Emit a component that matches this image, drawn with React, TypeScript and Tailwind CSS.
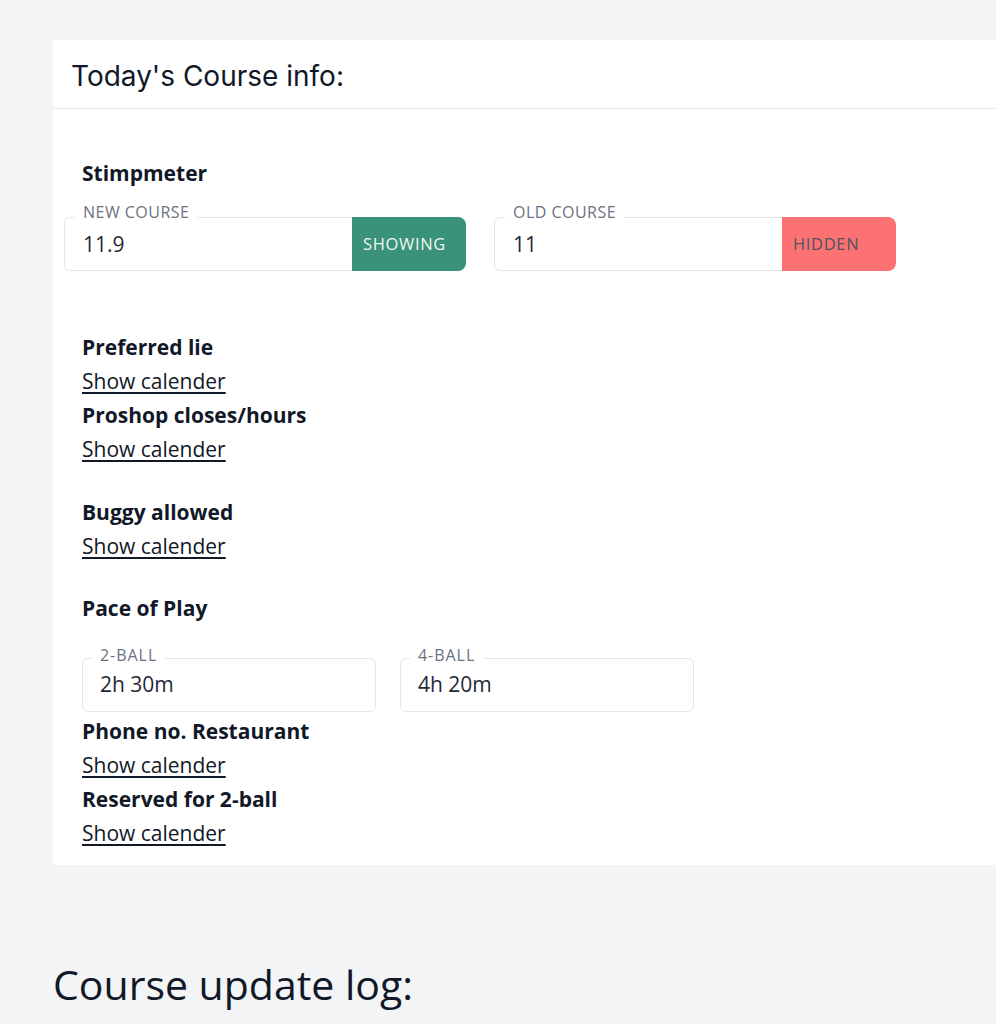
import React from "react";

function StimpField({ label, value, btn, btnClass }: { label: string; value: string; btn: string; btnClass: string }) {
  return (
    <div className="relative flex h-[54px] w-[402px]">
      <div className="flex flex-1 items-center rounded-l-[6px] border border-r-0 border-[#e5e7eb] pl-[18px] pt-[2px] text-[21px] text-[#1f2937]">
        {value}
      </div>
      <div className={`flex w-[114px] items-center rounded-r-[8px] pl-[11px] text-[16.5px] tracking-[0.04em] ${btnClass}`}>{btn}</div>
      <span className="absolute left-[11px] top-[-15px] bg-white px-[8px] text-[16px] leading-[20px] tracking-[0.03em] text-[#6b7280]">
        {label}
      </span>
    </div>
  );
}

function PaceField({ label, value }: { label: string; value: string }) {
  return (
    <div className="relative flex h-[54px] w-[294px] items-center rounded-[6px] border border-[#e5e7eb] pl-[17px] text-[21px] text-[#1f2937]">
      {value}
      <span className="absolute left-[9px] top-[-14px] bg-white px-[8px] text-[16px] leading-[20px] tracking-[0.06em] text-[#6b7280]">
        {label}
      </span>
    </div>
  );
}

function Heading({ children }: { children: React.ReactNode }) {
  return <div className="text-[21px] font-bold leading-[34px] text-[#111827]">{children}</div>;
}

function CalLink() {
  return (
    <div className="text-[21px] leading-[34px]">
      <a className="text-[#111827] underline underline-offset-[3px]" href="#">
        Show calender
      </a>
    </div>
  );
}

export default function App() {
  return (
    <div className="min-h-[1024px] bg-[#f3f4f6] pl-[53px] pt-[40px]" style={{ fontFamily: '"Open Sans", "Noto Sans", sans-serif' }}>
      <div className="w-[990px] bg-white">
        <div className="flex h-[69px] items-center border-b border-[#e5e7eb] pl-[18px] pt-[3px]">
          <h2 className="text-[28px] text-[#111827]" style={{ fontFamily: 'Inter, sans-serif' }}>
            Today's Course info:
          </h2>
        </div>
        <div className="flex flex-col pb-[15px] pl-[29px] pt-[47px]">
          <Heading>Stimpmeter</Heading>
          <div className="ml-[-18px] mt-[27px] flex gap-[28px]">
            <StimpField label="NEW COURSE" value="11.9" btn="SHOWING" btnClass="bg-[#3a9279] text-[#eef7f3]" />
            <StimpField label="OLD COURSE" value="11" btn="HIDDEN" btnClass="bg-[#fc7272] text-[#4b5563]" />
          </div>
          <div className="mt-[59px]">
            <Heading>Preferred lie</Heading>
            <CalLink />
            <Heading>Proshop closes/hours</Heading>
            <CalLink />
          </div>
          <div className="mt-[29px]">
            <Heading>Buggy allowed</Heading>
            <CalLink />
          </div>
          <div className="mt-[28px]">
            <Heading>Pace of Play</Heading>
          </div>
          <div className="mt-[33px] flex gap-[24px]">
            <PaceField label="2-BALL" value="2h 30m" />
            <PaceField label="4-BALL" value="4h 20m" />
          </div>
          <div className="mt-[2px]">
            <Heading>Phone no. Restaurant</Heading>
            <CalLink />
            <Heading>Reserved for 2-ball</Heading>
            <CalLink />
          </div>
        </div>
      </div>
      <h1 className="mt-[91px] text-[41px] leading-[56px] text-[#111827]">Course update log:</h1>
    </div>
  );
}
